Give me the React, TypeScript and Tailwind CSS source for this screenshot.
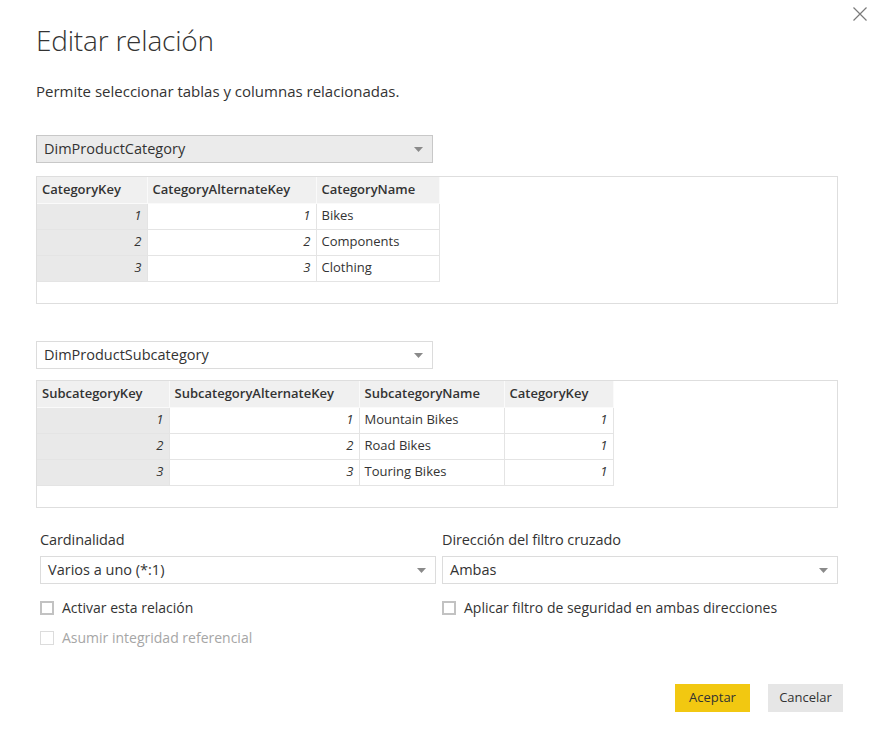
import React from 'react'

const FONT = { fontFamily: '"Open Sans", "Noto Sans", sans-serif' }

function Caret() {
  return (
    <svg width="9" height="5" viewBox="0 0 9 5" className="shrink-0">
      <path d="M0 0H9L4.5 5Z" fill="#8a8a8a" />
    </svg>
  )
}

function Select({ value, shaded, className = '' }: { value: string; shaded?: boolean; className?: string }) {
  return (
    <div
      className={`flex items-center justify-between h-[28px] pl-[7px] pr-[9px] border text-[14.5px] text-[#333] ${
        shaded ? 'bg-[#ebebeb] border-[#c8c8c8]' : 'bg-white border-[#dcdcdc]'
      } ${className}`}
    >
      <span>{value}</span>
      <Caret />
    </div>
  )
}

type Col = { name: string; width: number; align: 'left' | 'right' }

function DataTable({ cols, rows }: { cols: Col[]; rows: string[][] }) {
  return (
    <div className="h-[128px] border border-[#dedede] bg-white">
      <table className="border-collapse text-[13px] text-[#333]">
        <thead>
          <tr className="h-[26px]">
            {cols.map((c) => (
              <th
                key={c.name}
                style={{ width: c.width }}
                className="bg-[#f0f0f0] border-r border-b border-[#fafafa] px-[5px] text-left font-semibold"
              >
                {c.name}
              </th>
            ))}
          </tr>
        </thead>
        <tbody>
          {rows.map((r, i) => (
            <tr key={i} className="h-[26px]">
              {r.map((v, j) => (
                <td
                  key={j}
                  className={`px-[5px] border border-[#e4e4e4] ${j === 0 ? 'bg-[#e9e9e9] border-l-0' : 'bg-white'} ${
                    cols[j].align === 'right' ? 'text-right italic' : 'text-left'
                  }`}
                >
                  {v}
                </td>
              ))}
            </tr>
          ))}
        </tbody>
      </table>
    </div>
  )
}

function Check({ label, disabled }: { label: string; disabled?: boolean }) {
  return (
    <div className={`flex items-center gap-[8px] text-[14px] ${disabled ? 'text-[#a6a6a6]' : 'text-[#333]'}`}>
      <span
        className={`w-[14px] h-[14px] shrink-0 ${
          disabled ? 'border border-[#dcdcdc]' : 'border-2 border-[#c2c2c2]'
        }`}
      />
      <span>{label}</span>
    </div>
  )
}

export default function App() {
  return (
    <div className="w-[879px] h-[747px] bg-white relative" style={FONT}>
      <button className="absolute top-[7px] right-[12px] w-[14px] h-[14px]">
        <svg width="14" height="14" viewBox="0 0 14 14">
          <path d="M0.5 0.5L13.5 13.5M13.5 0.5L0.5 13.5" stroke="#7a7a7a" strokeWidth="1.2" />
        </svg>
      </button>

      <div className="pl-[36px] pr-[41px] pt-[20px]">
        <h1 className="text-[28px] font-light text-[#333] leading-[40px] tracking-[-0.2px]">Editar relación</h1>
        <p className="mt-[20px] text-[15px] text-[#333] leading-[22px]">
          Permite seleccionar tablas y columnas relacionadas.
        </p>

        <Select value="DimProductCategory" shaded className="mt-[33px] w-[397px]" />
        <div className="mt-[13px]">
          <DataTable
            cols={[
              { name: 'CategoryKey', width: 110, align: 'right' },
              { name: 'CategoryAlternateKey', width: 169, align: 'right' },
              { name: 'CategoryName', width: 123, align: 'left' },
            ]}
            rows={[
              ['1', '1', 'Bikes'],
              ['2', '2', 'Components'],
              ['3', '3', 'Clothing'],
            ]}
          />
        </div>

        <Select value="DimProductSubcategory" className="mt-[37px] w-[397px]" />
        <div className="mt-[11px]">
          <DataTable
            cols={[
              { name: 'SubcategoryKey', width: 132, align: 'right' },
              { name: 'SubcategoryAlternateKey', width: 190, align: 'right' },
              { name: 'SubcategoryName', width: 145, align: 'left' },
              { name: 'CategoryKey', width: 109, align: 'right' },
            ]}
            rows={[
              ['1', '1', 'Mountain Bikes', '1'],
              ['2', '2', 'Road Bikes', '1'],
              ['3', '3', 'Touring Bikes', '1'],
            ]}
          />
        </div>

        <div className="mt-[21px] pl-[4px] grid grid-cols-2 gap-x-[6px]">
          <div>
            <div className="text-[14.5px] text-[#333] leading-[22px] tracking-[-0.1px]">Cardinalidad</div>
            <Select value="Varios a uno (*:1)" className="mt-[5px]" />
            <div className="mt-[13px]">
              <Check label="Activar esta relación" />
            </div>
            <div className="mt-[9px]">
              <Check label="Asumir integridad referencial" disabled />
            </div>
          </div>
          <div>
            <div className="text-[14.5px] text-[#333] leading-[22px] tracking-[-0.1px]">Dirección del filtro cruzado</div>
            <Select value="Ambas" className="mt-[5px]" />
            <div className="mt-[13px]">
              <Check label="Aplicar filtro de seguridad en ambas direcciones" />
            </div>
          </div>
        </div>

        <div className="mt-[36px] flex justify-end gap-[18px] mr-[-5px]">
          <button className="w-[75px] h-[28px] bg-[#f2c811] text-[13px] text-[#333]">Aceptar</button>
          <button className="w-[75px] h-[28px] bg-[#e6e6e6] text-[13px] text-[#333]">Cancelar</button>
        </div>
      </div>
    </div>
  )
}
